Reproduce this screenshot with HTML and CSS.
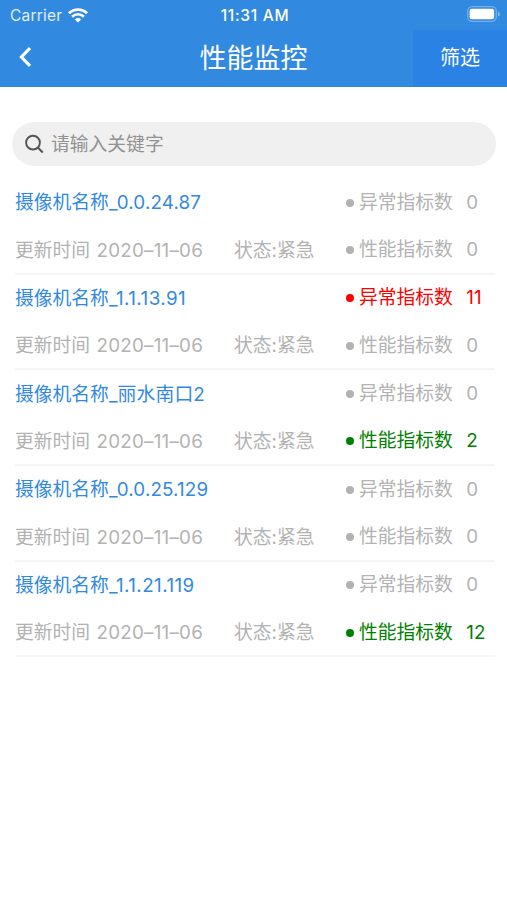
FILE: index.html
```html
<!DOCTYPE html>
<html lang="zh-CN">
<head>
  <meta charset="UTF-8">
  <meta name="viewport" content="width=device-width, initial-scale=1.0">
  <title>性能监控</title>
  <link rel="stylesheet" href="styles.css">
</head>
<body>
  <header class="header">
    <div class="status">
      <div class="status__carrier">
        <span>Carrier</span>
        <svg class="wifi" width="20" height="15" viewBox="0 0 20 15">
          <path d="M1 5.3a13 13 0 0 1 18 0" fill="none" stroke="#fff" stroke-width="2.8"/>
          <path d="M4.1 8.7a8.5 8.5 0 0 1 11.8 0" fill="none" stroke="#fff" stroke-width="2.6"/>
          <path d="M10 14.6l-3.1-3.1a4.5 4.5 0 0 1 6.2 0z" fill="#fff"/>
        </svg>
      </div>
      <span class="status__time">11:31 AM</span>
      <svg class="battery" width="33" height="16" viewBox="0 0 33 16">
        <rect x="0.7" y="0.7" width="28.6" height="14.6" rx="4.5" fill="none" stroke="#76afea" stroke-width="1.3"/>
        <rect x="2.6" y="2.8" width="24.6" height="10.4" rx="2.2" fill="#fff"/>
        <path d="M31 5.5q1.8 0.8 1.8 2.5t-1.8 2.5z" fill="#8dbcee"/>
      </svg>
    </div>
    <div class="nav">
      <button class="nav__back">
        <svg width="14" height="22" viewBox="0 0 14 22">
          <path d="M12 2.2L3.4 11l8.6 8.8" fill="none" stroke="#fff" stroke-width="3.1"/>
        </svg>
      </button>
      <h1 class="nav__title">性能监控</h1>
      <button class="nav__filter">筛选</button>
    </div>
  </header>
  <main>
    <label class="search">
      <svg width="20" height="20" viewBox="0 0 20 20">
        <circle cx="8" cy="8.6" r="6.9" fill="none" stroke="#555" stroke-width="1.9"/>
        <path d="M12.8 13.6l5 4.8" stroke="#555" stroke-width="2.1"/>
      </svg>
      <input class="search__input" type="text" placeholder="请输入关键字">
    </label>
    <ul class="list">
      <li class="item">
        <div class="row">
          <span class="name">摄像机名称<span class="ip">_0.0.24.87</span></span>
          <span class="metric">异常指标数<b class="metric__num">0</b></span>
        </div>
        <div class="row">
          <span class="date">更新时间 <span class="date__day">2020–11–06</span></span>
          <span class="state">状态:紧急</span>
          <span class="metric">性能指标数<b class="metric__num">0</b></span>
        </div>
      </li>
      <li class="item">
        <div class="row">
          <span class="name">摄像机名称<span class="ip ip--wide">_1.1.13.91</span></span>
          <span class="metric metric--red">异常指标数<b class="metric__num">11</b></span>
        </div>
        <div class="row">
          <span class="date">更新时间 <span class="date__day">2020–11–06</span></span>
          <span class="state">状态:紧急</span>
          <span class="metric">性能指标数<b class="metric__num">0</b></span>
        </div>
      </li>
      <li class="item">
        <div class="row">
          <span class="name">摄像机名称<span class="ip">_丽水南口2</span></span>
          <span class="metric">异常指标数<b class="metric__num">0</b></span>
        </div>
        <div class="row">
          <span class="date">更新时间 <span class="date__day">2020–11–06</span></span>
          <span class="state">状态:紧急</span>
          <span class="metric metric--green">性能指标数<b class="metric__num">2</b></span>
        </div>
      </li>
      <li class="item">
        <div class="row">
          <span class="name">摄像机名称<span class="ip">_0.0.25.129</span></span>
          <span class="metric">异常指标数<b class="metric__num">0</b></span>
        </div>
        <div class="row">
          <span class="date">更新时间 <span class="date__day">2020–11–06</span></span>
          <span class="state">状态:紧急</span>
          <span class="metric">性能指标数<b class="metric__num">0</b></span>
        </div>
      </li>
      <li class="item">
        <div class="row">
          <span class="name">摄像机名称<span class="ip ip--wide">_1.1.21.119</span></span>
          <span class="metric">异常指标数<b class="metric__num">0</b></span>
        </div>
        <div class="row">
          <span class="date">更新时间 <span class="date__day">2020–11–06</span></span>
          <span class="state">状态:紧急</span>
          <span class="metric metric--green">性能指标数<b class="metric__num">12</b></span>
        </div>
      </li>
    </ul>
  </main>
</body>
</html>
```
FILE: styles.css
```css
* {
  box-sizing: border-box;
}
body {
  margin: 0;
  background-color: #fff;
  font-family: Inter, "Noto Sans CJK SC", sans-serif;
  font-size: 18.8px;
  color: #b2b2b2;
}
button {
  padding: 0;
  border: none;
  background: none;
  color: #fff;
  font-family: inherit;
  cursor: pointer;
}
.header {
  height: 87px;
  background-color: #3189e0;
  color: #fff;
}
.status {
  display: grid;
  grid-template-columns: 1fr auto 1fr;
  align-items: center;
  height: 30px;
  padding: 0 7px 0 10px;
  font-size: 15.5px;
}
.status__carrier {
  display: flex;
  align-items: center;
  gap: 6px;
  color: #e3effb;
  letter-spacing: 0.2px;
}
.status__time {
  font-weight: 500;
  font-size: 15.5px;
  letter-spacing: 0.7px;
}
.battery {
  justify-self: end;
  margin-top: -3px;
}
.nav {
  display: grid;
  grid-template-columns: 94px 1fr 94px;
  height: 57px;
}
.nav__back {
  display: flex;
  align-items: center;
  padding: 0 0 4px 18px;
}
.nav__title {
  margin: 0;
  text-align: center;
  font-size: 27px;
  font-weight: 400;
  line-height: 57px;
}
.nav__filter {
  padding-bottom: 2px;
  background-color: #2a83e4;
  font-size: 20px;
  line-height: 54px;
}
.search {
  display: flex;
  align-items: center;
  gap: 6px;
  height: 44px;
  margin: 35px 11px 13px 12px;
  padding: 0 13px;
  border-radius: 22px;
  background-color: #f0f0f0;
}
.search__input {
  flex: 1;
  padding: 1px 0 0;
  border: none;
  outline: none;
  background: none;
  font: inherit;
}
.search__input::placeholder {
  color: #929292;
}
.list {
  margin: 0;
  padding: 0 12px 0 15px;
  list-style: none;
}
.item {
  height: 95.7px;
  border-bottom: 2px solid #f5f5f5;
}
.row {
  display: grid;
  grid-template-columns: 219px 112px 1fr;
  align-items: center;
  height: 47.4px;
  line-height: 24px;
  white-space: nowrap;
}
.name {
  grid-column: 1 / 3;
  color: #3189e0;
}
.name,
.date,
.state {
  margin-top: 1px;
}
.ip {
  letter-spacing: 0.15px;
}
.ip--wide {
  letter-spacing: 0.45px;
}
.date__day {
  margin-left: 1px;
  letter-spacing: 0.25px;
}
.metric {
  display: flex;
  align-items: baseline;
}
.metric::before {
  content: "";
  align-self: center;
  width: 8px;
  height: 8px;
  margin-right: 5px;
  border-radius: 50%;
  background-color: currentColor;
}
.metric__num {
  margin-left: 13.4px;
  font-weight: 400;
}
.metric--red {
  color: #fe0000;
}
.metric--green {
  color: #008000;
}
```
